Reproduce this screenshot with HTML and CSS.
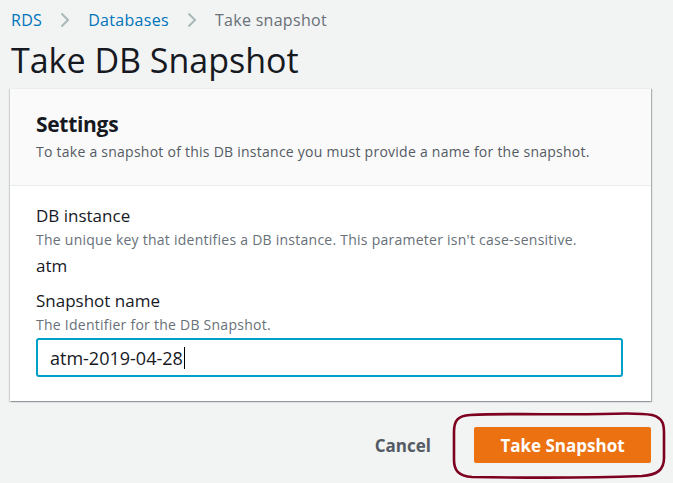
FILE: index.html
```html
<!DOCTYPE html>
<html>
<head>
<meta charset="utf-8">
<link rel="stylesheet" href="styles.css">
</head>
<body>
<div class="page">
  <nav class="crumbs">
    <a class="crumb-link">RDS</a>
    <svg class="chev" width="10" height="16" viewBox="0 0 10 16"><path d="M1.5 1.5 L8 8 L1.5 14.5" fill="none" stroke="#aab7b8" stroke-width="2"/></svg>
    <a class="crumb-link">Databases</a>
    <svg class="chev" width="10" height="16" viewBox="0 0 10 16"><path d="M1.5 1.5 L8 8 L1.5 14.5" fill="none" stroke="#aab7b8" stroke-width="2"/></svg>
    <span class="crumb-current">Take snapshot</span>
  </nav>
  <h1 class="title">Take DB Snapshot</h1>
  <section class="panel">
    <header class="panel-head">
      <h2 class="panel-title">Settings</h2>
      <p class="panel-desc">To take a snapshot of this DB instance you must provide a name for the snapshot.</p>
    </header>
    <div class="panel-body">
      <div class="field">
        <div class="label">DB instance</div>
        <div class="hint">The unique key that identifies a DB instance. This parameter isn't case-sensitive.</div>
        <div class="value">atm</div>
      </div>
      <div class="field">
        <div class="label">Snapshot name</div>
        <div class="hint">The Identifier for the DB Snapshot.</div>
        <div class="input"><span>atm-2019-04-28</span><span class="caret"></span></div>
      </div>
    </div>
  </section>
  <div class="actions">
    <button class="btn-cancel">Cancel</button>
    <div class="primary-wrap">
      <button class="btn-primary">Take Snapshot</button>
      <svg class="annot" width="216" height="68" viewBox="0 0 216 68"><path d="M18 3 C60 1 100 3 150 2 C175 1 190 1 200 3 C212 6 212 14 212 22 L212 46 C212 58 205 63 190 64 C140 66 80 66 20 65 C6 64 2 58 2 48 L2 20 C2 8 6 4 18 3 Z" fill="none" stroke="#7d0021" stroke-width="2.6"/></svg>
    </div>
  </div>
</div>
</body>
</html>
```
FILE: styles.css
```css
html, body {
  margin: 0;
  padding: 0;
  background: #f2f3f3;
}
body {
  font-family: "Open Sans", "Noto Sans", sans-serif;
  color: #16191f;
}
.page {
  width: 673px;
  height: 483px;
  overflow: hidden;
}
.crumbs {
  display: flex;
  align-items: center;
  gap: 18px;
  padding: 8px 0 0 11px;
  height: 24px;
  font-size: 16px;
  letter-spacing: 0.3px;
}
.crumb-link {
  color: #0073bb;
}
.crumb-current {
  color: #687078;
}
.chev {
  display: block;
}
.title {
  margin: 8px 0 0 11px;
  font-size: 34px;
  font-weight: 400;
  line-height: 40px;
  letter-spacing: 0;
  color: #16191f;
}
.panel {
  margin: 8px 0 0 10px;
  width: 641px;
  background: #fff;
  box-shadow: 1px 1px 1px 0 rgba(0,28,36,0.3), -1px 1px 1px 0 rgba(0,28,36,0.15);
  border-top: 1px solid #eaeded;
}
.panel-head {
  background: #fafafa;
  border-bottom: 1px solid #eaeded;
  padding: 21px 26px 23px;
}
.panel-title {
  margin: 0;
  font-size: 21px;
  line-height: 28px;
  font-weight: 700;
  letter-spacing: -0.3px;
}
.panel-desc {
  margin: 4px 0 0;
  font-size: 14px;
  line-height: 20px;
  color: #545b64;
  letter-spacing: 0.25px;
}
.panel-body {
  padding: 18px 28px 24px 26px;
  display: flex;
  flex-direction: column;
  gap: 12px;
}
.label {
  font-size: 17px;
  line-height: 24px;
}
.hint {
  font-size: 14px;
  line-height: 24px;
  color: #687078;
  letter-spacing: 0.25px;
}
.value {
  margin-top: 3px;
  font-size: 17px;
  line-height: 22px;
}
.input {
  margin-top: 1px;
  height: 35px;
  border: 2px solid #00a1c9;
  border-radius: 3px;
  display: flex;
  align-items: center;
  padding-left: 12px;
  font-size: 18px;
}
.caret {
  display: inline-block;
  width: 1px;
  height: 22px;
  background: #000;
  margin-left: 1px;
}
.actions {
  display: flex;
  justify-content: flex-end;
  align-items: center;
  gap: 43px;
  width: 651px;
  margin-top: 26px;
}
.btn-cancel {
  border: 0;
  background: none;
  font-family: inherit;
  font-size: 17px;
  font-weight: 700;
  color: #545b64;
  padding: 0;
}
.primary-wrap {
  position: relative;
}
.btn-primary {
  display: block;
  width: 177px;
  height: 36px;
  border: 0;
  border-radius: 2px;
  background: #ec7211;
  color: #fff;
  font-family: inherit;
  font-size: 17px;
  font-weight: 700;
}
.annot {
  position: absolute;
  left: -22px;
  top: -15px;
}
```
